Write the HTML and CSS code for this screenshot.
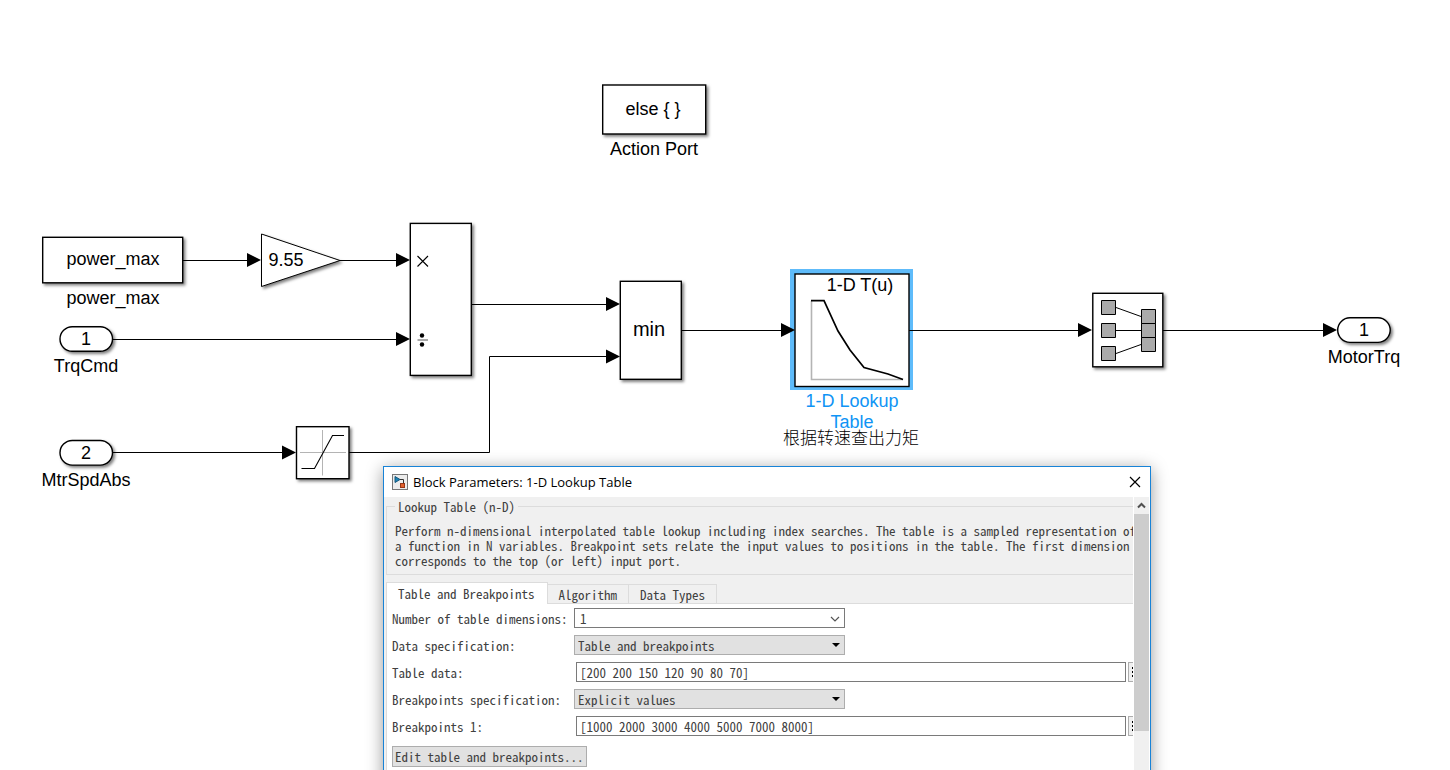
FILE: index.html
```html
<!DOCTYPE html>
<html lang="en">
<head>
<meta charset="utf-8">
<title>Block Parameters: 1-D Lookup Table</title>
<link rel="stylesheet" href="styles.css">
</head>
<body>
<main class="canvas">
  <svg class="diagram" role="img" aria-label="Torque limit block diagram">
    <defs>
      <filter id="shadow" x="-20%" y="-20%" width="150%" height="150%">
        <feDropShadow dx="2" dy="2" stdDeviation="1.5" flood-color="#000" flood-opacity="0.5"/>
      </filter>
      <path id="arrow" d="M-14 -7L0 0L-14 7Z"/>
    </defs>

    <g class="wire">
      <path d="M183 260.5H250M340 260.5H398M113 339.5H398M113 452.5H284M472 304.5H608M349 452.5H489.500V356.500H608M682 330.500H783M910 330.500H1080M1163 330.500H1326"/>
    </g>

    <g class="block" filter="url(#shadow)">
      <rect x="602.700" y="85" width="103" height="49"/>
      <rect x="42.700" y="237.300" width="140" height="45.500"/>
      <rect x="60" y="326.700" width="52.500" height="24.600" rx="12.300"/>
      <rect x="60" y="440.500" width="52.500" height="24.600" rx="12.300"/>
      <rect x="410.300" y="223.400" width="61" height="152"/>
      <rect x="296.500" y="426.700" width="52.500" height="52"/>
      <rect x="620.300" y="281.300" width="61" height="98"/>
      <rect x="1092.800" y="293.300" width="70" height="73.500"/>
      <rect x="1337.700" y="317.800" width="52.500" height="24.600" rx="12.300"/>
      <path class="thin" d="M261.500 234L340 260.500L261.500 286.500Z"/>
    </g>

    <rect class="selection" x="790" y="269" width="123" height="121"/>
    <rect class="block" x="795" y="274" width="114" height="112.500"/>
    <path class="wire" d="M909 330.500H914"/>
    <path class="axis wide" d="M811.500 301V379.500H903"/>
    <path class="curve" d="M811 300.700H824L838 331L850 350L864 367.500L888 374L903 379.500"/>

    <path class="axis" d="M322.500 430V475.500M300 452.500H346"/>
    <path class="curve fine" d="M301.500 468.500H314.500L332.500 435.500H344"/>

    <path class="curve fine" d="M417.500 256L428 266.500M428 256L417.500 266.500"/>
    <path class="divide" d="M417.500 340H428"/>
    <circle cx="422" cy="335.500" r="2.200"/>
    <circle cx="422" cy="344.500" r="2.200"/>

    <g class="bus">
      <path d="M1116 307.500L1141 316.500M1116 330.500H1141M1116 353.500L1141 344.500"/>
      <path d="M1101.500 300.500h14v14h-14zM1101.500 323.500h14v14h-14zM1101.500 346.500h14v14h-14zM1141.500 309.500h14v14h-14zM1141.500 323.500h14v14h-14zM1141.500 337.500h14v14h-14z"/>
    </g>

    <use href="#arrow" x="261" y="260"/>
    <use href="#arrow" x="410" y="260"/>
    <use href="#arrow" x="410" y="339"/>
    <use href="#arrow" x="296" y="452.500"/>
    <use href="#arrow" x="620" y="304"/>
    <use href="#arrow" x="620" y="356.500"/>
    <use href="#arrow" x="795" y="330"/>
    <use href="#arrow" x="1092" y="330"/>
    <use href="#arrow" x="1337" y="330"/>

    <g class="label">
      <text x="653" y="115">else { }</text>
      <text x="654" y="155">Action Port</text>
      <text x="113" y="265">power_max</text>
      <text x="113" y="304">power_max</text>
      <text x="286" y="266">9.55</text>
      <text x="86" y="345">1</text>
      <text x="86" y="372">TrqCmd</text>
      <text x="86" y="459">2</text>
      <text x="86" y="486">MtrSpdAbs</text>
      <text class="large" x="649" y="336">min</text>
      <text x="860" y="291">1-D T(u)</text>
      <text class="selected" x="852" y="407">1-D Lookup</text>
      <text class="selected" x="852" y="428">Table</text>
      <text class="note" lang="zh" x="851" y="444">根据转速查出力矩</text>
      <text x="1364" y="336">1</text>
      <text x="1364" y="363">MotorTrq</text>
    </g>
  </svg>

  <section class="dialog" role="dialog" aria-labelledby="dialog-title">
    <header class="titlebar">
      <svg class="app-icon" width="16" height="16" viewBox="0 0 16 16" aria-hidden="true">
        <rect x="0.500" y="0.500" width="15" height="15" fill="#ececec" stroke="#777"/>
        <path d="M8 5.500H11.500V9" fill="none" stroke="#333"/>
        <path d="M3 2.500V8.500L8 5.500Z" fill="#1b84b5" stroke="#17577d"/>
        <rect x="8.500" y="9.500" width="4" height="4" fill="#e2602d" stroke="#973616"/>
      </svg>
      <h1 class="title" id="dialog-title">Block Parameters: 1-D Lookup Table</h1>
      <button class="close" type="button" aria-label="Close">
        <svg width="12" height="12" viewBox="0 0 12 12"><path d="M1 1L11 11M11 1L1 11" fill="none" stroke="#000" stroke-width="1.200"/></svg>
      </button>
    </header>
    <div class="dialog-body">
      <form class="content">
        <fieldset class="about">
          <legend>Lookup Table (n-D)</legend>
          <p>Perform n-dimensional interpolated table lookup including index searches. The table is a sampled representation of<br>a function in N variables. Breakpoint sets relate the input values to positions in the table. The first dimension<br>corresponds to the top (or left) input port.</p>
        </fieldset>
        <div class="tabs" role="tablist">
          <button class="tab active" type="button" role="tab" aria-selected="true">Table and Breakpoints</button>
          <button class="tab" type="button" role="tab" aria-selected="false">Algorithm</button>
          <button class="tab" type="button" role="tab" aria-selected="false">Data Types</button>
        </div>
        <div class="pane" role="tabpanel">
          <div class="fields">
            <label for="dims">Number of table dimensions:</label>
            <span class="picker editable">
              <select id="dims"><option>1</option></select>
              <svg width="10" height="6" viewBox="0 0 10 6" aria-hidden="true"><path d="M1 1L5 5L9 1" fill="none" stroke="#555" stroke-width="1.200"/></svg>
            </span>
            <label for="data-spec">Data specification:</label>
            <span class="picker">
              <select id="data-spec"><option>Table and breakpoints</option></select>
              <svg width="8" height="4" viewBox="0 0 8 4" aria-hidden="true"><path d="M0 0H8L4 4Z"/></svg>
            </span>
            <label for="table-data">Table data:</label>
            <span class="entry">
              <input id="table-data" type="text" value="[200 200 150 120 90 80 70]">
              <button class="more" type="button" aria-label="Table data options"><svg width="2" height="12" viewBox="0 0 2 12"><path d="M1 1h1v2H1zM1 5h1v2H1zM1 9h1v2H1z"/></svg></button>
            </span>
            <label for="bp-spec">Breakpoints specification:</label>
            <span class="picker">
              <select id="bp-spec"><option>Explicit values</option></select>
              <svg width="8" height="4" viewBox="0 0 8 4" aria-hidden="true"><path d="M0 0H8L4 4Z"/></svg>
            </span>
            <label for="bp1">Breakpoints 1:</label>
            <span class="entry">
              <input id="bp1" type="text" value="[1000 2000 3000 4000 5000 7000 8000]">
              <button class="more" type="button" aria-label="Breakpoints 1 options"><svg width="2" height="12" viewBox="0 0 2 12"><path d="M1 1h1v2H1zM1 5h1v2H1zM1 9h1v2H1z"/></svg></button>
            </span>
          </div>
          <button class="edit" type="button">Edit table and breakpoints...</button>
        </div>
      </form>
      <div class="scrollbar">
        <button class="scroll-up" type="button" aria-label="Scroll up">
          <svg width="9" height="7" viewBox="0 0 9 7"><path d="M1 5.500L4.500 2L8 5.500" fill="none" stroke="#505050" stroke-width="2"/></svg>
        </button>
        <div class="thumb"></div>
      </div>
    </div>
  </section>
</main>
</body>
</html>
```

FILE: styles.css
```css
* { box-sizing: border-box; }

body {
  margin: 0;
  background: #fff;
  font-family: "Liberation Sans", Arial, sans-serif;
}

button, input, select {
  margin: 0;
  padding: 0;
  border: 0;
  border-radius: 0;
  background: none;
  color: inherit;
  font: inherit;
}

.canvas {
  position: relative;
  height: 100vh;
  overflow: hidden;
}

/* Diagram */
.diagram {
  display: block;
  width: 100%;
  height: 100%;
}

.wire { fill: none; stroke: #000; stroke-width: 1; }
.block { fill: #fff; stroke: #000; stroke-width: 1.4; }
.thin { stroke-width: 1; }
.selection { fill: #5ebbfa; }
.axis { fill: none; stroke: #b4b4b4; }
.wide { stroke-width: 1.6; }
.curve { fill: none; stroke: #000; stroke-width: 1.7; }
.fine { stroke-width: 1.1; }
.divide { stroke: #555; }
.bus { fill: #aaa; stroke: #000; }

.label {
  fill: #000;
  font-size: 18px;
  text-anchor: middle;
}
.large { font-size: 20px; }
.selected { fill: #0f94f5; }
.note {
  font-family: "Noto Sans CJK SC", sans-serif;
  font-size: 17px;
  font-weight: 300;
}

/* Parameter dialog */
.dialog {
  position: absolute;
  top: 466px;
  left: 383px;
  right: 299px;
  height: 400px;
  display: flex;
  flex-direction: column;
  border: 1px solid #1883d7;
  background: #f0f0f0;
  box-shadow: 0 3px 16px rgba(0, 0, 0, 0.4);
  color: #404040;
  font-family: "Noto Sans Mono CJK SC", "Liberation Mono", monospace;
  font-size: 13px;
  line-height: 15px;
}

.titlebar {
  display: flex;
  align-items: center;
  height: 30px;
  padding: 0 9px 0 8px;
  gap: 5px;
  background: #fff;
}
.title {
  flex: 1;
  margin: 0;
  color: #000;
  font: 400 13px/16px "Open Sans", sans-serif;
}
.close {
  display: flex;
  color: #000;
}

.dialog-body {
  flex: 1;
  display: flex;
  min-height: 0;
}
.content {
  flex: 1;
  display: flex;
  flex-direction: column;
  min-width: 0;
  padding: 2px 0 0 2px;
  overflow: hidden;
}

.about {
  min-width: 0;
  margin: 0 0 7px;
  padding: 9px 0 6px 8px;
  border: 1px solid #dcdcdc;
  border-right: 0;
}
.about legend { padding: 0 3px; }
.about p {
  margin: 0;
  white-space: nowrap;
}

.tabs {
  display: flex;
  align-items: flex-end;
  height: 22px;
  box-shadow: inset 0 -1px #dcdcdc;
}
.tab {
  height: 20px;
  padding: 0 11px;
  border: 1px solid #dcdcdc;
  border-left: 0;
  background: #f0f0f0;
}
.tab.active {
  height: 22px;
  padding: 0 12px 0 11px;
  border-left: 1px solid #dcdcdc;
  border-bottom: 0;
  background: #fff;
}

.pane {
  flex: 1;
  padding: 4px 0 0 5px;
  border-left: 1px solid #dcdcdc;
  background: #fff;
}
.fields {
  display: grid;
  grid-template-columns: 182px 1fr;
  grid-auto-rows: 20px;
  row-gap: 7px;
  align-items: center;
}
.picker {
  position: relative;
  width: 271px;
  height: 20px;
}
.picker select {
  appearance: none;
  width: 100%;
  height: 100%;
  padding-left: 3px;
  border: 1px solid #adadad;
  background: #e1e1e1;
}
.picker.editable select {
  padding-left: 5px;
  border-color: #7a7a7a;
  background: #fff;
}
.picker svg {
  position: absolute;
  top: 8px;
  right: 5px;
  pointer-events: none;
}
.entry {
  display: flex;
  gap: 2px;
  min-width: 0;
  padding-left: 2px;
}
.entry input {
  flex: 1;
  min-width: 0;
  height: 20px;
  padding: 0 3px;
  border: 1px solid #7a7a7a;
  background: #fff;
}
.more {
  display: flex;
  align-items: center;
  width: 5px;
  height: 20px;
  padding-left: 2px;
  border: 1px solid #adadad;
  border-right: 0;
  background: #f0f0f0;
}
.edit {
  height: 21px;
  margin-top: 10px;
  padding: 0 2px;
  border: 1px solid #adadad;
  background: #e1e1e1;
}

.scrollbar {
  width: 17px;
  border-left: 1px solid #fff;
  border-right: 1px solid #fff;
  background: #f0f0f0;
}
.scroll-up {
  display: flex;
  align-items: center;
  justify-content: center;
  width: 100%;
  height: 17px;
}
.thumb {
  height: 217px;
  background: #cdcdcd;
}
```
